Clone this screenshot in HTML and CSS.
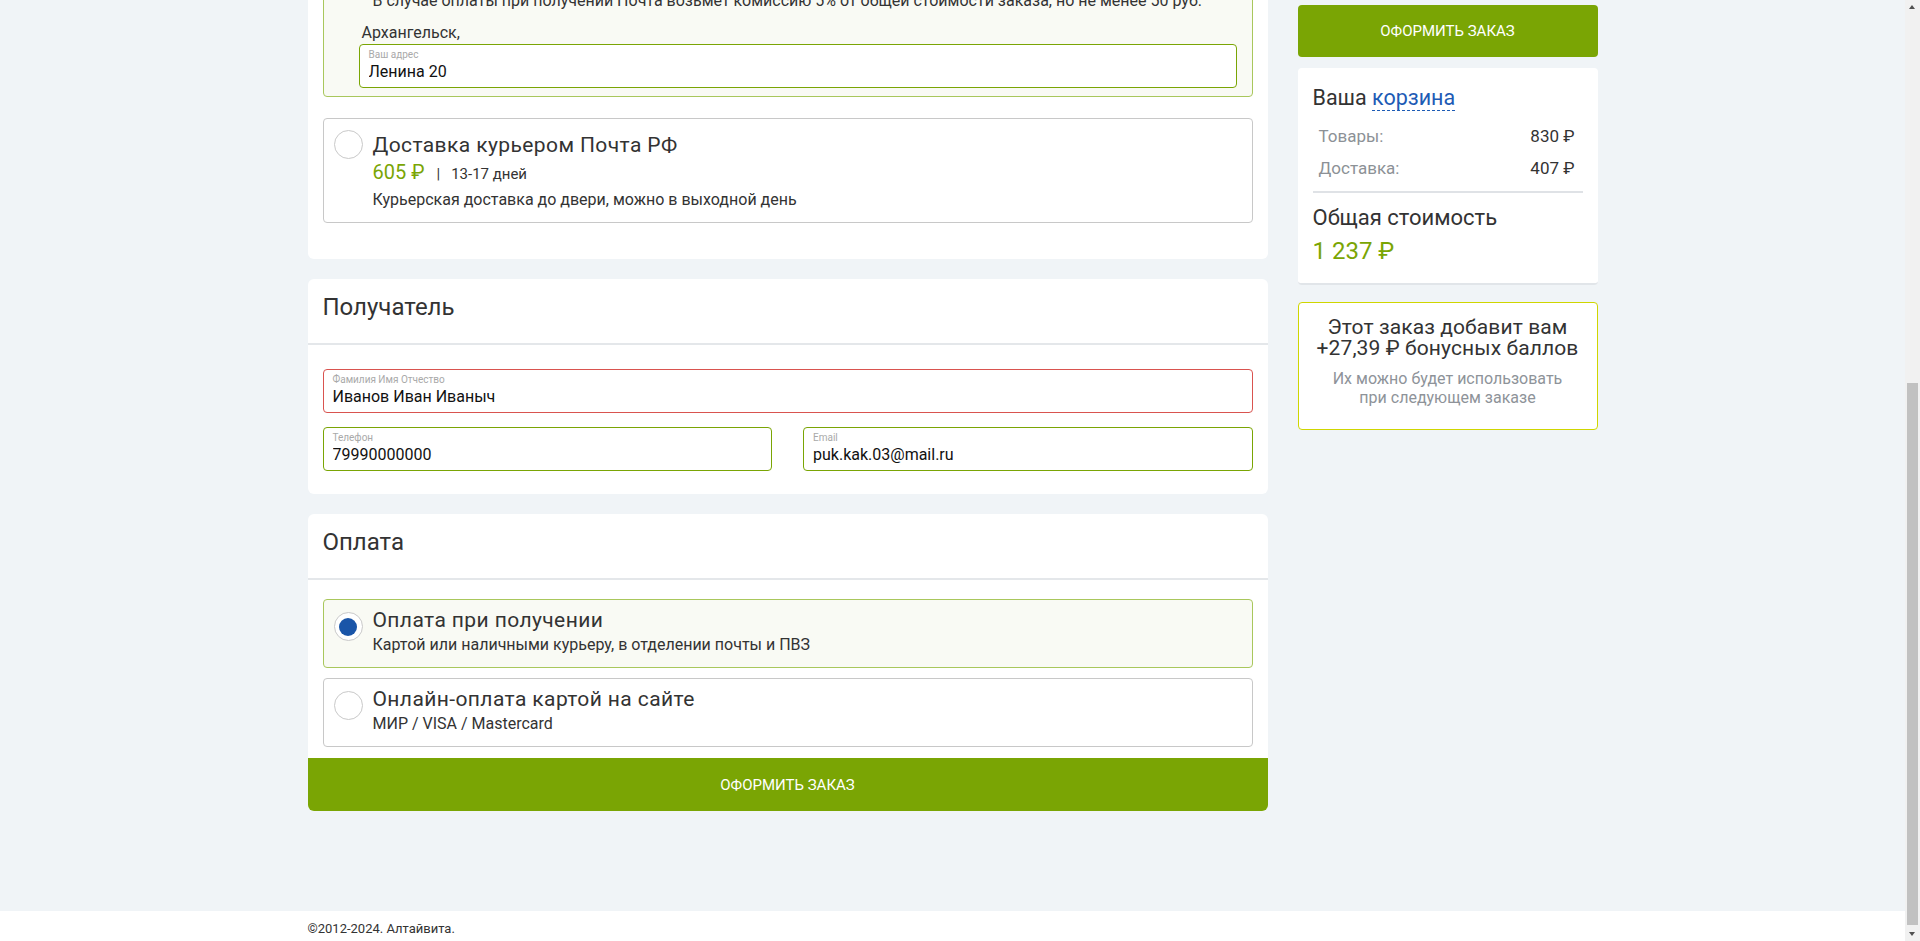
FILE: index.html
```html
<!DOCTYPE html>
<html lang="ru">
<head>
<meta charset="utf-8">
<title>Оформление заказа — Алтайвита</title>
<link rel="stylesheet" href="styles.css">
</head>
<body>
<div class="screen">
  <div class="screen-body">
    <div class="main-col">
      <section class="panel">
        <div class="panel-body delivery-body">
          <div class="option selected selected-delivery">
            <div class="option-row">
              <span class="radio checked"></span>
              <div class="option-text">
                <div class="option-title">Доставка в отделение Почта РФ</div>
                <div class="option-meta"><span class="price">407 ₽</span><span class="sep">|</span><span>10-14 дней</span></div>
                <div class="option-desc">Получение в почтовом отделении по паспорту</div>
                <div class="option-note">В случае оплаты при получении Почта возьмет комиссию 5% от общей стоимости заказа, но не менее 50 руб.</div>
              </div>
            </div>
            <div class="option-extra">
              <div class="city">Архангельск,</div>
              <label class="field valid">
                <span class="field-label">Ваш адрес</span>
                <input class="field-input" type="text" value="Ленина 20">
              </label>
            </div>
          </div>

          <div class="option">
            <div class="option-row">
              <span class="radio"></span>
              <div class="option-text">
                <div class="option-title">Доставка курьером Почта РФ</div>
                <div class="option-meta"><span class="price">605 ₽</span><span class="sep">|</span><span>13-17 дней</span></div>
                <div class="option-desc">Курьерская доставка до двери, можно в выходной день</div>
              </div>
            </div>
          </div>
        </div>
      </section>

      <section class="panel">
        <div class="panel-head"><h2>Получатель</h2></div>
        <div class="panel-body recipient-body">
          <label class="field invalid">
            <span class="field-label">Фамилия Имя Отчество</span>
            <input class="field-input" type="text" value="Иванов Иван Иваныч">
          </label>
          <div class="row-2">
            <label class="field valid">
              <span class="field-label">Телефон</span>
              <input class="field-input" type="text" value="79990000000">
            </label>
            <label class="field valid">
              <span class="field-label">Email</span>
              <input class="field-input" type="text" value="puk.kak.03@mail.ru">
            </label>
          </div>
        </div>
      </section>

      <section class="panel">
        <div class="panel-head"><h2>Оплата</h2></div>
        <div class="panel-body payment-body">
          <div class="option pay selected">
            <div class="option-row">
              <span class="radio checked"></span>
              <div class="option-text">
                <div class="option-title">Оплата при получении</div>
                <div class="option-desc">Картой или наличными курьеру, в отделении почты и ПВЗ</div>
              </div>
            </div>
          </div>
          <div class="option pay">
            <div class="option-row">
              <span class="radio"></span>
              <div class="option-text">
                <div class="option-title">Онлайн-оплата картой на сайте</div>
                <div class="option-desc">МИР / VISA / Mastercard</div>
              </div>
            </div>
          </div>
        </div>
        <button class="btn-submit" type="button">Оформить заказ</button>
      </section>
    </div>

    <aside class="side-col">
      <button class="btn-order" type="button">Оформить заказ</button>
      <div class="cart">
        <div class="cart-title">Ваша <a class="cart-link" href="#">корзина</a></div>
        <div class="cart-rows">
          <div class="cart-row"><span class="k">Товары:</span><span class="v">830 ₽</span></div>
          <div class="cart-row"><span class="k">Доставка:</span><span class="v">407 ₽</span></div>
        </div>
        <div class="cart-divider"></div>
        <div class="cart-total-label">Общая стоимость</div>
        <div class="cart-total">1 237 ₽</div>
      </div>
      <div class="bonus">
        <div class="bonus-title">Этот заказ добавит вам<br>+27,39 ₽ бонусных баллов</div>
        <div class="bonus-note">Их можно будет использовать<br>при следующем заказе</div>
      </div>
    </aside>
  </div>

  <footer class="site-footer">
    <div class="footer-inner">©2012-2024. Алтайвита.</div>
  </footer>
</div>

<div class="scrollbar" aria-hidden="true">
  <span class="sb-arrow sb-up"></span>
  <span class="sb-thumb"></span>
  <span class="sb-arrow sb-down"></span>
</div>
</body>
</html>
```

FILE: styles.css
```css
* { box-sizing: border-box; }

html, body { height: 100%; }

body {
  margin: 0;
  overflow: hidden;
  font-family: Roboto, "Liberation Sans", sans-serif;
  color: #333;
  background: #f0f4f7;
}

/* page frame: visible window of the scrolled page */
.screen {
  height: 100vh;
  margin-right: 15px;
  display: flex;
  flex-direction: column;
}
.screen-body {
  flex: 1;
  min-height: 0;
  overflow: hidden;
  width: 1290px;
  margin: 0 auto;
  display: flex;
  gap: 30px;
}
.main-col {
  width: 960px;
  display: flex;
  flex-direction: column;
  justify-content: flex-end;
  gap: 20px;
  padding-bottom: 100px;
}
.main-col > * { flex: none; }
.side-col { width: 300px; align-self: flex-start; padding-top: 5px; }

/* panels */
.panel { background: #fff; border-radius: 6px; }
.panel-head { padding: 12px 15px 20px; border-bottom: 2px solid #e4e7ea; }
.panel-head h2 { margin: 0; font-size: 24px; line-height: 32px; font-weight: 400; color: #333; }

.panel-body { padding: 20px 15px; }
.delivery-body { display: flex; flex-direction: column; gap: 21px; padding-bottom: 36px; }
.recipient-body { padding: 24px 15px 23px; }
.payment-body { display: flex; flex-direction: column; gap: 10px; padding: 19px 15px 11px; }

/* fields */
.field {
  display: block;
  height: 44px;
  padding: 4px 9px;
  border: 1px solid #7aa504;
  border-radius: 4px;
  background: #fff;
}
.field.invalid { border-color: #d9534f; }
.field-label { display: block; font-size: 10px; line-height: 12px; color: #a9a9a9; }
.field-input {
  display: block;
  width: 100%;
  height: 22px;
  padding: 0;
  border: 0;
  outline: 0;
  background: transparent;
  font-family: inherit;
  font-size: 16px;
  line-height: 22px;
  color: #111;
}

.row-2 { display: grid; grid-template-columns: 1fr 1fr; gap: 31px; margin-top: 14px; }

/* options */
.option {
  border: 1px solid #c8c8c8;
  border-radius: 4px;
  background: #fff;
  padding: 11px 11px 12px 10px;
}
.option.selected { border-color: #a9c75c; background: #f9faf4; }
.selected-delivery { padding-bottom: 8px; }
.option-row { display: flex; gap: 10px; }

.radio {
  flex: none;
  width: 29px;
  height: 29px;
  border: 1px solid #c9c9c9;
  border-radius: 50%;
  background: #fff;
  display: flex;
  align-items: center;
  justify-content: center;
}
.radio.checked::after {
  content: "";
  width: 18px;
  height: 18px;
  border-radius: 50%;
  background: #1a55a8;
}

.option-title { margin-top: 3px; font-size: 21px; line-height: 24px; letter-spacing: 0.4px; color: #333; }
.option-meta { margin-top: 5px; height: 24px; font-size: 15px; line-height: 24px; white-space: nowrap; }
.price { font-size: 20px; line-height: 20px; color: #7aa504; }
.sep { margin: 0 11px 0 12px; }
.option-desc { margin-top: 4px; font-size: 16px; line-height: 20px; }
.option-note { margin-top: 8px; font-size: 16px; line-height: 20px; }
.option-extra { padding: 11px 4px 0 25px; }
.city { padding-left: 3px; font-size: 16px; line-height: 22px; }

.option.pay { padding-top: 8px; }
.option.pay .radio { margin-top: 4px; }
.option.pay .option-title { margin-top: 0; }
.option.pay .option-desc { margin-top: 3px; }

/* buttons */
.btn-submit,
.btn-order {
  display: block;
  width: 100%;
  border: 0;
  background: #7aa504;
  color: #fff;
  font-family: inherit;
  font-size: 15px;
  text-transform: uppercase;
  cursor: pointer;
}
.btn-submit { height: 53px; border-radius: 0 0 6px 6px; }
.btn-order { height: 52px; border-radius: 4px; }

/* cart */
.cart {
  margin-top: 11px;
  padding: 16px 15px 17px;
  background: #fff;
  border-radius: 4px;
  border-bottom: 2px solid #e1e5e9;
}
.cart-title { font-size: 21.5px; line-height: 28px; }
.cart-link { color: #1d5bb5; text-decoration: none; border-bottom: 1px dashed #1d5bb5; }
.cart-rows { margin-top: 8px; }
.cart-row {
  display: flex;
  justify-content: space-between;
  align-items: center;
  height: 32px;
  padding: 0 8px 0 6px;
  font-size: 17px;
}
.cart-row .k { color: #8c9196; }
.cart-row .v { color: #333; }
.cart-divider { height: 2px; margin-top: 7px; background: #dfe2e6; }
.cart-total-label { margin-top: 11px; font-size: 22px; line-height: 28px; }
.cart-total { margin-top: 4px; font-size: 24px; line-height: 30px; color: #7aa504; }

/* bonus */
.bonus {
  margin-top: 17px;
  padding: 14px 6px 22px;
  border: 1px solid #cfd600;
  border-radius: 4px;
  background: #fff;
  text-align: center;
}
.bonus-title { font-size: 21px; line-height: 21px; letter-spacing: 0.1px; color: #333; }
.bonus-note { margin-top: 10px; font-size: 16px; line-height: 19px; color: #8e9399; }

/* footer */
.site-footer { flex: none; height: 30px; background: #fff; }
.footer-inner {
  width: 1290px;
  margin: 0 auto;
  padding-top: 6px;
  font-size: 13px;
  line-height: 24px;
  color: #333;
}

/* browser scrollbar drawn over the right edge */
.scrollbar {
  position: fixed;
  top: 0;
  right: 0;
  width: 15px;
  height: 100%;
  background: #f1f1f1;
}
.sb-thumb {
  position: absolute;
  top: 383px;
  left: 2px;
  right: 2px;
  height: 542px;
  background: #c1c1c1;
}
.sb-arrow {
  position: absolute;
  left: 4px;
  width: 0;
  height: 0;
  border-left: 3.5px solid transparent;
  border-right: 3.5px solid transparent;
}
.sb-up { top: 5px; border-bottom: 4px solid #505050; }
.sb-down { bottom: 5px; border-top: 4px solid #505050; }
```
